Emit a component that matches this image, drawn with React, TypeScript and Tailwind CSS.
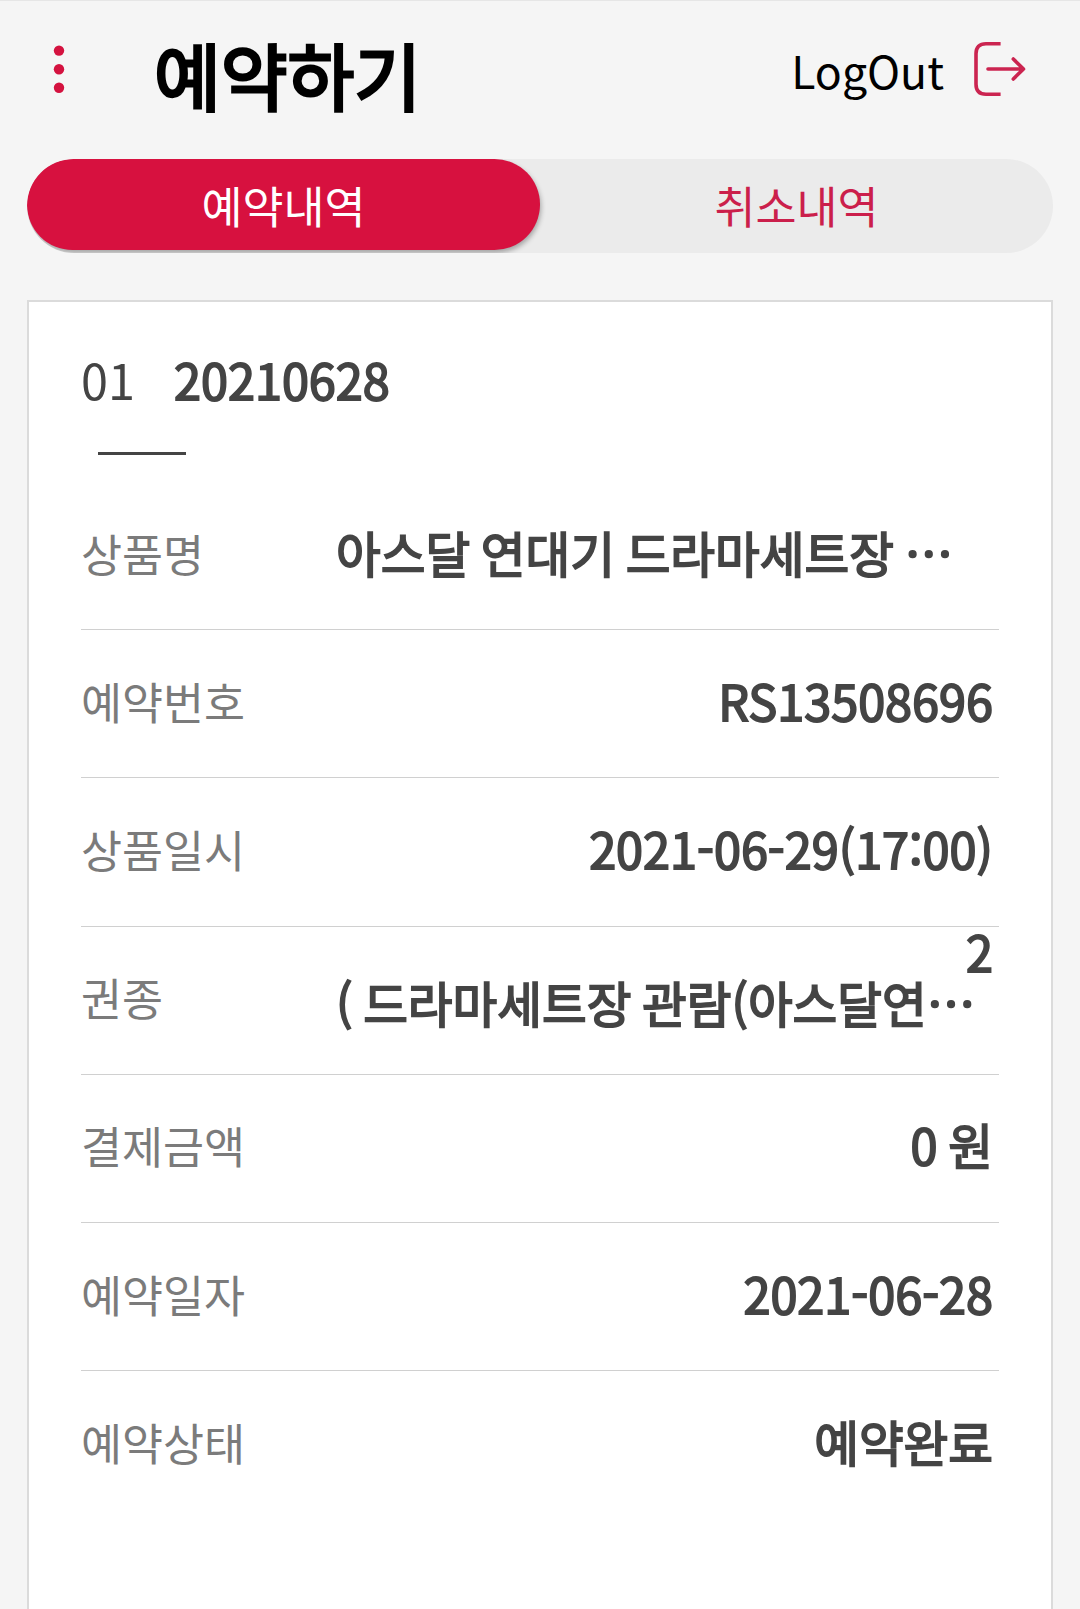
interface DetailRow {
  label: string;
  lines: string[];
  clipped?: boolean;
}

const ROWS: DetailRow[] = [
  { label: "상품명", lines: ["아스달 연대기 드라마세트장 …"], clipped: true },
  { label: "예약번호", lines: ["RS13508696"] },
  { label: "상품일시", lines: ["2021-06-29(17:00)"] },
  { label: "권종", lines: ["2", "( 드라마세트장 관람(아스달연…"], clipped: true },
  { label: "결제금액", lines: ["0 원"] },
  { label: "예약일자", lines: ["2021-06-28"] },
  { label: "예약상태", lines: ["예약완료"] },
];

function MenuDots() {
  return (
    <svg width="12" height="50" viewBox="0 0 12 50" fill="#d4123f">
      <circle cx="6" cy="5.6" r="5.2" />
      <circle cx="6" cy="24.3" r="5.2" />
      <circle cx="6" cy="42.7" r="5.2" />
    </svg>
  );
}

function LogOutIcon() {
  return (
    <svg width="54" height="56" viewBox="0 0 54 56" fill="none" stroke="#cb2450" strokeWidth="3.6">
      <path d="M27.6 2.7H13Q3 2.7 3 12.7V43.3Q3 53.3 13 53.3H27.6" />
      <path d="M15 28H50.5M40.3 18L50.5 28L40.3 38" strokeLinecap="round" strokeLinejoin="round" />
    </svg>
  );
}

function Row({ row }: { row: DetailRow }) {
  return (
    <li className="flex h-[148.2px] items-center justify-between border-b border-[#d0d0d0] pb-[6px] last:border-b-0">
      <span className="text-[44.6px] leading-[50px] text-[#7b7b7b]">{row.label}</span>
      <div
        className={`flex w-[663px] flex-col pr-1.5 text-[48.6px] leading-[51px] text-[#444] [word-spacing:-2.9px] [-webkit-text-stroke:1.8px_#444] ${
          row.lines.length > 1 ? "pb-[40px]" : "pb-px"
        }`}
      >
        {row.lines.map((line, i) => (
          <span
            key={i}
            className={row.clipped && i === row.lines.length - 1 ? "whitespace-nowrap" : "text-right whitespace-nowrap"}
          >
            {line}
          </span>
        ))}
      </div>
    </li>
  );
}

export default function App() {
  return (
    <div
      lang="ko"
      className="flex h-[1609px] w-[1080px] flex-col overflow-hidden border-t border-[#e6e6e6] bg-[#f5f5f5] font-['Noto_Sans_CJK_KR',sans-serif]"
    >
      <header className="flex h-[158px] shrink-0 items-start pl-[53px]">
        <button className="mt-[44px]">
          <MenuDots />
        </button>
        <h1 className="mt-[18px] ml-[89px] text-[72.6px] leading-[110px] font-normal text-black [-webkit-text-stroke:3px_#000]">
          예약하기
        </h1>
        <button className="mt-[40px] mr-[53px] ml-auto flex items-start gap-[29px]">
          <span className="-mt-[3px] text-[44.6px] leading-[64px] text-black">LogOut</span>
          <LogOutIcon />
        </button>
      </header>

      <nav className="mx-[27px] flex h-[94px] shrink-0 overflow-hidden rounded-full bg-[#ebebeb] text-[44.6px]">
        <button className="h-[91px] w-1/2 rounded-full bg-[#d7113f] pt-px text-white shadow-[1px_3px_5px_rgba(0,0,0,0.3)]">
          예약내역
        </button>
        <button className="h-[91px] w-1/2 pt-px text-[#cb1f4b]">취소내역</button>
      </nav>

      <section className="mx-[27px] mt-[47px] h-[1400px] shrink-0 border-2 border-[#dbdbdb] bg-white px-[52px]">
        <div className="mt-[42px] flex h-[70px] items-center text-[48.6px] text-[#444]">
          <span className="w-[93px]">01</span>
          <strong className="font-normal [-webkit-text-stroke:1.8px_#444]">20210628</strong>
        </div>
        <div className="mt-[38px] ml-[17px] h-[3px] w-[88px] bg-[#444]" />
        <ul className="mt-[27px]">
          {ROWS.map((row) => (
            <Row key={row.label} row={row} />
          ))}
        </ul>
      </section>
    </div>
  );
}
